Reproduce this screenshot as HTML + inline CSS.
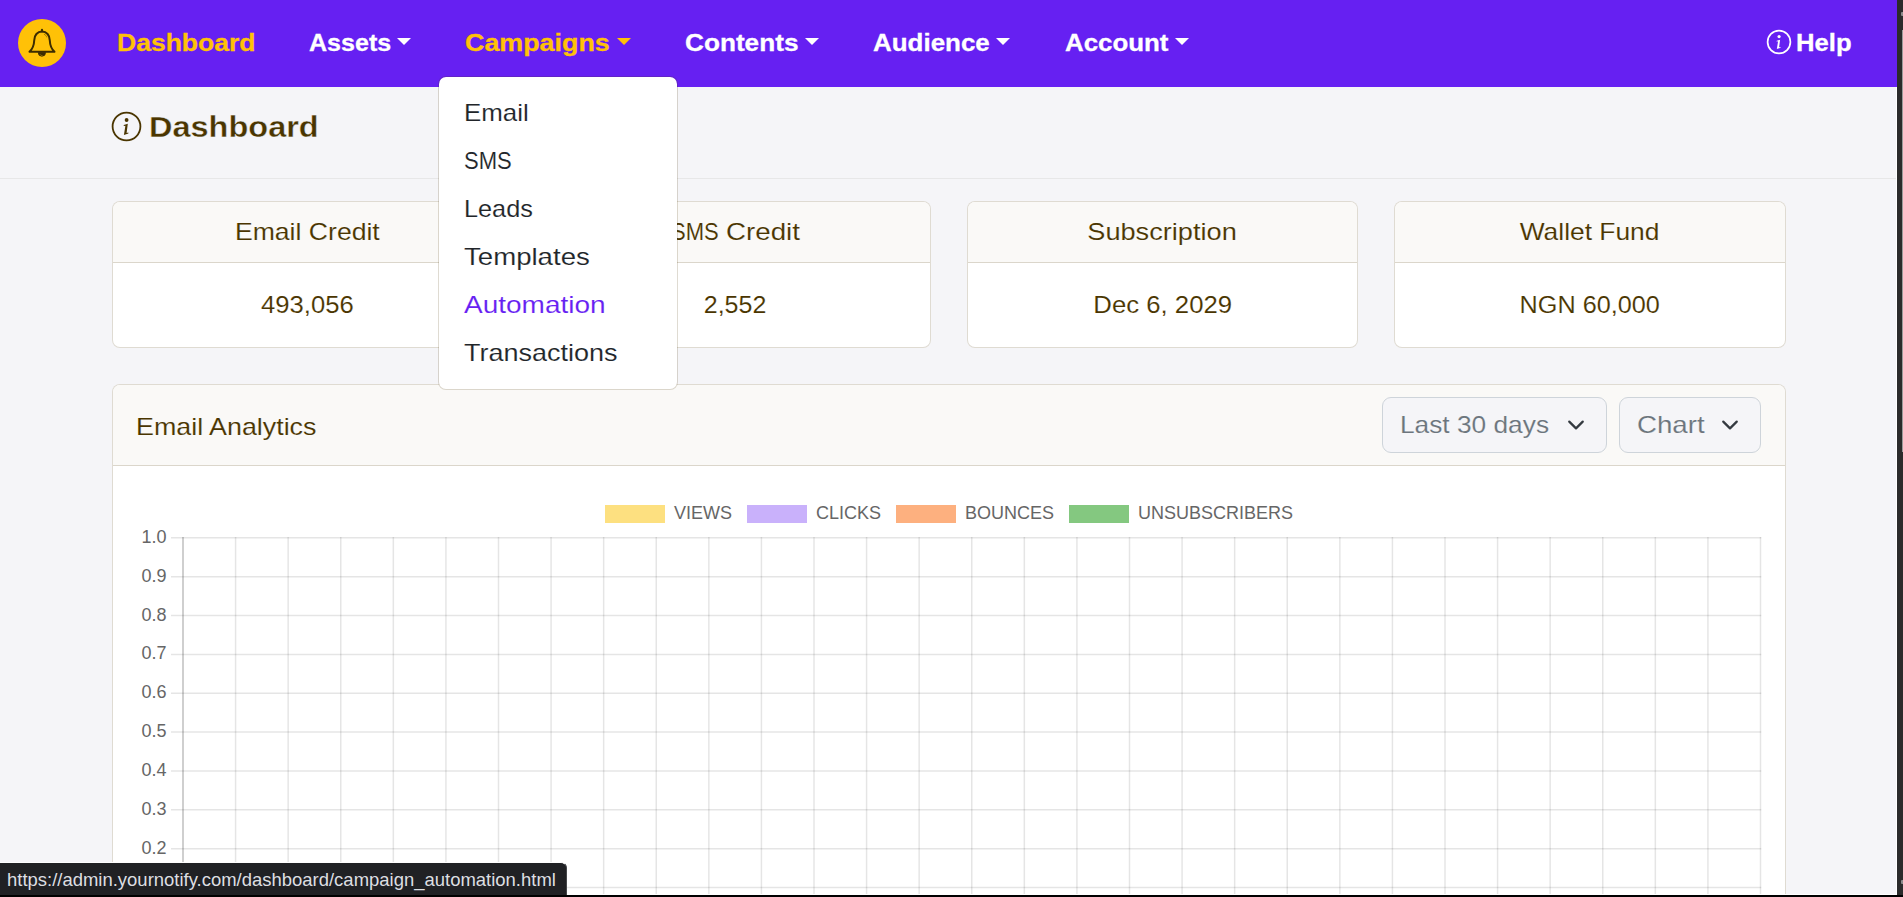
<!DOCTYPE html>
<html lang="en">
<head>
<meta charset="utf-8">
<title>Dashboard</title>
<style>
*{box-sizing:border-box;margin:0;padding:0}
html,body{width:1903px;height:897px;overflow:hidden}
body{position:relative;background:#f5f5f8;color:#4a3500;font-family:"Liberation Sans",sans-serif;font-size:24px;line-height:36px}
a{text-decoration:none;color:inherit}
.sx{display:inline-block;transform-origin:0 50%;white-space:nowrap;transform:translateY(var(--dy,0px)) scale(var(--s,1),var(--v,1))}
.sc{display:inline-block;transform-origin:50% 50%;white-space:nowrap;transform:translateY(var(--dy,0px)) scale(var(--s,1),var(--v,1))}
/* ---------- navbar ---------- */
.navbar{position:absolute;left:0;top:0;width:1897px;height:87px;background:#6620f2}
.brand{position:absolute;left:18px;top:19px;width:48px;height:48px;border-radius:50%;background:#ffc107}
.brand svg{position:absolute;left:0;top:0}
.nav-link{position:absolute;top:25px;-webkit-text-stroke:.3px currentColor;height:36px;line-height:36px;font-weight:bold;font-size:24px;color:#fff;white-space:nowrap}
.nav-link.active{color:#ffc107}
.caret{position:absolute;top:38px;width:0;height:0;border-left:7px solid transparent;border-right:7px solid transparent;border-top:7px solid #fff}
.caret.active{border-top-color:#ffc107}
/* ---------- page header ---------- */
.page-head{position:absolute;left:0;top:87px;width:1897px;height:92px;border-bottom:1px solid #e7e7e8}
.page-title{position:absolute;left:149px;top:107px;--v:.97;-webkit-text-stroke:.35px #f5f5f8;font-size:30px;line-height:40px;font-weight:bold;color:#4a3500;white-space:nowrap}
/* ---------- cards ---------- */
.card{position:absolute;background:#fff;border:1px solid rgba(74,53,0,.175);border-radius:8px;overflow:hidden}
.card-header{-webkit-text-stroke:.12px #faf9f7;background:#faf9f7;border-bottom:1px solid rgba(74,53,0,.175);height:61px;line-height:36px;padding-top:12px;text-align:center;white-space:nowrap}
.card-body{-webkit-text-stroke:.12px #fff;text-align:center;padding-top:24px;white-space:nowrap}
.stat{top:201px;width:391px;height:147px}
.card-body .sc{--v:1.03}
/* ---------- dropdown ---------- */
.dropdown-menu{position:absolute;left:438px;top:76px;width:240px;height:314px;background:#fff;background-clip:padding-box;border:1px solid rgba(74,53,0,.175);border-radius:8px;padding:13px 0 12px}
.dropdown-item{-webkit-text-stroke:.12px #fff;display:block;height:48px;line-height:36px;padding:5px 24px 7px 24.800px;color:#212529;white-space:nowrap}
.dropdown-item.hover{color:#6620f2}
/* ---------- selects ---------- */
.form-select{-webkit-text-stroke:.12px #f5f5f8;position:absolute;top:397px;height:56px;background:#f5f5f8;border:1px solid #ced4da;border-radius:9px;color:#6c757d;line-height:36px;padding:9px 0 0 16.800px;white-space:nowrap}
.form-select svg{position:absolute;top:18px}
/* ---------- chart ---------- */
.chart{position:absolute;left:0;top:466px;width:1897px;height:431px;overflow:hidden}
.chart svg{display:block}
/* ---------- browser chrome ---------- */
.status{position:absolute;left:0;top:862px;width:567px;height:35px;background:#202124;border-top:1px solid #fdfdfd;border-right:1px solid #45474a;border-top-right-radius:6px;color:#dddfe2;font-size:19px;line-height:20px;padding:6.6px 0 0 7px;white-space:nowrap}
.scroll{position:absolute;left:1897px;top:0;width:6px;height:897px;background:#2b2b2b}
.scroll-thumb{position:absolute;left:1902px;top:30px;width:1px;height:422px;background:#9a9a9a}
.scroll-arrow{position:absolute;left:1901px;width:2px;height:4px;background:#8c8c8c;border-radius:1px 0 0 1px}
.edge-r{position:absolute;left:1896px;top:87px;width:1px;height:808px;background:#fff}
.edge-b{position:absolute;left:0;top:895px;width:1903px;height:2px;background:#000;z-index:5}
.edge-w{position:absolute;left:0;top:894px;width:1897px;height:1px;background:#fff}
</style>
</head>
<body>

<!-- NAVBAR -->
<div class="navbar">
  <a class="brand">
    <svg width="48" height="48" viewBox="0 0 48 48"><g fill="none" stroke="#3d2c00" stroke-linejoin="round" stroke-linecap="round"><path d="M24 10.9v1.5" stroke-width="2.2"/><path d="M11.5 32.8C14.5 30 16 26.5 16.2 21.5 16.2 16 19.5 12.6 24 12.6 28.5 12.6 31.8 16 31.8 21.5 32 26.5 33.5 30 36.500 32.8Z" stroke-width="2"/><path d="M26.3 15.3c1.2.5 2 1.5 2.4 2.7" stroke="#8a6a00" stroke-width=".8"/></g><path d="M20.2 33.5a3.700 3.700 0 0 0 7.4 0z" fill="#3d2c00" stroke="#3d2c00" stroke-width=".8"/><path d="M22 35.2a2.200 2.200 0 0 0 2.6 1.3" fill="none" stroke="#a07c00" stroke-width=".7"/></svg>
  </a>
  <a class="nav-link active" style="left:117px"><span class="sx" style="--s:1.105">Dashboard</span></a>
  <a class="nav-link" style="left:309px"><span class="sx" style="--s:1.044">Assets</span></a><i class="caret" style="left:397px"></i>
  <a class="nav-link active" style="left:465px"><span class="sx" style="--s:1.119">Campaigns</span></a><i class="caret active" style="left:617px"></i>
  <a class="nav-link" style="left:685px"><span class="sx" style="--s:1.091">Contents</span></a><i class="caret" style="left:805px"></i>
  <a class="nav-link" style="left:873px"><span class="sx" style="--s:1.081">Audience</span></a><i class="caret" style="left:996px"></i>
  <a class="nav-link" style="left:1065px"><span class="sx" style="--s:1.078">Account</span></a><i class="caret" style="left:1175px"></i>
  <svg class="info" style="position:absolute;left:1763.8px;top:27.1px" width="30" height="30" viewBox="-15.0 -15.0 30 30"><circle r="11.4" fill="none" stroke="#fff" stroke-width="1.7"/><circle cx="0.08" cy="-5.43" r="1.59" fill="#fff"/><path d="M-2.26 -1.17 L1.09 -2.26 L0.08 5.35 L1.50 5.02 L1.59 5.85 L-2.17 7.11 L-0.92 -0.67 L-2.34 -0.33Z" fill="#fff"/></svg>
  <a class="nav-link" style="left:1796px"><span class="sx" style="--s:1.069">Help</span></a>
</div>

<!-- PAGE HEADER -->
<div class="page-head"></div>
<svg class="info" style="position:absolute;left:109.0px;top:108.5px" width="35" height="35" viewBox="-17.5 -17.5 35 35"><circle r="13.9" fill="none" stroke="#4a3500" stroke-width="1.8"/><circle cx="0.10" cy="-6.50" r="1.90" fill="#4a3500"/><path d="M-2.70 -1.40 L1.30 -2.70 L0.10 6.40 L1.80 6.00 L1.90 7.00 L-2.60 8.50 L-1.10 -0.80 L-2.80 -0.40Z" fill="#4a3500"/></svg>
<h1 class="page-title"><span class="sx" style="--s:1.083">Dashboard</span></h1>

<!-- STAT CARDS -->
<div class="card stat" style="left:112px"><div class="card-header"><span class="sc" style="--s:1.108">Email Credit</span></div><div class="card-body"><span class="sc" style="--s:1.068">493,056</span></div></div>
<div class="card stat" style="left:540px"><div class="card-header" style="position:relative"><span class="sx" style="--s:.918;position:absolute;left:130.1px;top:12px">SMS</span> <span class="sx" style="--s:1.155;position:absolute;left:184.5px;top:12px">Credit</span></div><div class="card-body"><span class="sc" style="--s:1.042">2,552</span></div></div>
<div class="card stat" style="left:967px"><div class="card-header"><span class="sc" style="--s:1.132">Subscription</span></div><div class="card-body"><span class="sc" style="--s:1.072">Dec 6, 2029</span></div></div>
<div class="card stat" style="left:1394px;width:392px"><div class="card-header"><span class="sc" style="--s:1.099">Wallet Fund</span></div><div class="card-body"><span class="sc" style="--s:1.052">NGN 60,000</span></div></div>

<!-- ANALYTICS CARD -->
<div class="card" style="left:112px;top:384px;width:1674px;height:560px;border-bottom-left-radius:0;border-bottom-right-radius:0">
  <div class="card-header" style="height:81px;text-align:left;padding:24px 0 0 22.800px"><span class="sx" style="--s:1.118">Email Analytics</span></div>
</div>
<div class="form-select" style="left:1382px;width:225px"><span class="sx" style="--s:1.095">Last 30 days</span><svg style="left:184px" width="18" height="18" viewBox="0 0 16 16"><path fill="none" stroke="#343a40" stroke-linecap="round" stroke-linejoin="round" stroke-width="2" d="m2 5 6 6 6-6"/></svg></div>
<div class="form-select" style="left:1619px;width:142px"><span class="sx" style="--s:1.153">Chart</span><svg style="left:100.7px" width="18" height="18" viewBox="0 0 16 16"><path fill="none" stroke="#343a40" stroke-linecap="round" stroke-linejoin="round" stroke-width="2" d="m2 5 6 6 6-6"/></svg></div>

<!-- CHART -->
<div class="chart">
<svg class="chart-svg" width="1897" height="431" viewBox="0 466 1897 431" font-family="Liberation Sans, sans-serif" font-size="18" fill="#666">
<rect x="605" y="505" width="60" height="18" fill="#fde080"/>
<text x="674" y="519.4">VIEWS</text>
<rect x="747" y="505" width="60" height="18" fill="#c9b1fb"/>
<text x="816" y="519.4">CLICKS</text>
<rect x="896" y="505" width="60" height="18" fill="#fdb07f"/>
<text x="965" y="519.4">BOUNCES</text>
<rect x="1069" y="505" width="60" height="18" fill="#84c880"/>
<text x="1138" y="519.4">UNSUBSCRIBERS</text>
<g stroke="#000" stroke-opacity="0.1" stroke-width="1.5" shape-rendering="auto">
<line x1="171" y1="537.80" x2="1761.25" y2="537.80"/>
<line x1="171" y1="576.66" x2="1761.25" y2="576.66"/>
<line x1="171" y1="615.52" x2="1761.25" y2="615.52"/>
<line x1="171" y1="654.38" x2="1761.25" y2="654.38"/>
<line x1="171" y1="693.24" x2="1761.25" y2="693.24"/>
<line x1="171" y1="732.10" x2="1761.25" y2="732.10"/>
<line x1="171" y1="770.96" x2="1761.25" y2="770.96"/>
<line x1="171" y1="809.82" x2="1761.25" y2="809.82"/>
<line x1="171" y1="848.68" x2="1761.25" y2="848.68"/>
<line x1="171" y1="887.54" x2="1761.25" y2="887.54"/>
<line x1="235.58" y1="537.05" x2="235.58" y2="900"/>
<line x1="288.17" y1="537.05" x2="288.17" y2="900"/>
<line x1="340.75" y1="537.05" x2="340.75" y2="900"/>
<line x1="393.33" y1="537.05" x2="393.33" y2="900"/>
<line x1="445.92" y1="537.05" x2="445.92" y2="900"/>
<line x1="498.50" y1="537.05" x2="498.50" y2="900"/>
<line x1="551.08" y1="537.05" x2="551.08" y2="900"/>
<line x1="603.67" y1="537.05" x2="603.67" y2="900"/>
<line x1="656.25" y1="537.05" x2="656.25" y2="900"/>
<line x1="708.83" y1="537.05" x2="708.83" y2="900"/>
<line x1="761.42" y1="537.05" x2="761.42" y2="900"/>
<line x1="814.00" y1="537.05" x2="814.00" y2="900"/>
<line x1="866.58" y1="537.05" x2="866.58" y2="900"/>
<line x1="919.17" y1="537.05" x2="919.17" y2="900"/>
<line x1="971.75" y1="537.05" x2="971.75" y2="900"/>
<line x1="1024.33" y1="537.05" x2="1024.33" y2="900"/>
<line x1="1076.92" y1="537.05" x2="1076.92" y2="900"/>
<line x1="1129.50" y1="537.05" x2="1129.50" y2="900"/>
<line x1="1182.08" y1="537.05" x2="1182.08" y2="900"/>
<line x1="1234.67" y1="537.05" x2="1234.67" y2="900"/>
<line x1="1287.25" y1="537.05" x2="1287.25" y2="900"/>
<line x1="1339.83" y1="537.05" x2="1339.83" y2="900"/>
<line x1="1392.42" y1="537.05" x2="1392.42" y2="900"/>
<line x1="1445.00" y1="537.05" x2="1445.00" y2="900"/>
<line x1="1497.58" y1="537.05" x2="1497.58" y2="900"/>
<line x1="1550.17" y1="537.05" x2="1550.17" y2="900"/>
<line x1="1602.75" y1="537.05" x2="1602.75" y2="900"/>
<line x1="1655.33" y1="537.05" x2="1655.33" y2="900"/>
<line x1="1707.92" y1="537.05" x2="1707.92" y2="900"/>
<line x1="1760.50" y1="537.05" x2="1760.50" y2="900"/>
</g>
<line x1="183.0" y1="537.05" x2="183.0" y2="900" stroke="#000" stroke-opacity="0.25" stroke-width="1.5"/>
<g text-anchor="end">
<text x="166.6" y="542.80">1.0</text>
<text x="166.6" y="581.66">0.9</text>
<text x="166.6" y="620.52">0.8</text>
<text x="166.6" y="659.38">0.7</text>
<text x="166.6" y="698.24">0.6</text>
<text x="166.6" y="737.10">0.5</text>
<text x="166.6" y="775.96">0.4</text>
<text x="166.6" y="814.82">0.3</text>
<text x="166.6" y="853.68">0.2</text>
<text x="166.6" y="892.54">0.1</text>
</g>
</svg>
</div>

<!-- DROPDOWN -->
<div class="dropdown-menu">
  <a class="dropdown-item"><span class="sx" style="--s:1.079">Email</span></a>
  <a class="dropdown-item"><span class="sx" style="--s:0.918">SMS</span></a>
  <a class="dropdown-item"><span class="sx" style="--s:1.053">Leads</span></a>
  <a class="dropdown-item"><span class="sx" style="--s:1.15">Templates</span></a>
  <a class="dropdown-item hover"><span class="sx" style="--s:1.167">Automation</span></a>
  <a class="dropdown-item"><span class="sx" style="--s:1.125">Transactions</span></a>
</div>

<!-- BROWSER CHROME -->
<div class="edge-r"></div>
<div class="edge-w"></div>
<div class="edge-b"></div>
<div class="scroll"></div><div class="scroll-thumb"></div><div class="scroll-arrow" style="top:12px"></div><div class="scroll-arrow" style="top:880px"></div>
<div class="status"><span class="sx" style="--s:.972;--v:1">https://admin.yournotify.com/dashboard/campaign_automation.html</span></div>

</body>
</html>
